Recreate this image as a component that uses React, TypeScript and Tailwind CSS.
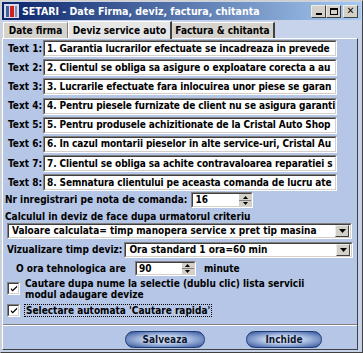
import React from "react";

const font = { fontFamily: '"DejaVu Sans Condensed", "Liberation Sans", sans-serif', fontStretch: "condensed" as const };

const texts = [
  "1. Garantia lucrarilor efectuate se incadreaza in prevede",
  "2. Clientul se obliga sa asigure o exploatare corecta a au",
  "3. Lucrarile efectuate fara inlocuirea unor piese se garan",
  "4. Pentru piesele furnizate de client nu se asigura garanti",
  "5. Pentru produsele achizitionate de la Cristal Auto Shop",
  "6. In cazul montarii pieselor in alte service-uri, Cristal Au",
  "7. Clientul se obliga sa achite contravaloarea reparatiei s",
  "8. Semnatura clientului pe aceasta comanda de lucru ate",
];

function Sunken({ className = "", children }: { className?: string; children?: React.ReactNode }) {
  return (
    <div className={"border border-t-[#808080] border-l-[#808080] border-b-white border-r-white " + className}>
      <div className="h-full w-full border border-t-[#404040] border-l-[#404040] border-b-[#d4d0c8] border-r-[#d4d0c8] bg-white flex items-center overflow-hidden">
        {children}
      </div>
    </div>
  );
}

function Raised({ className = "", children }: { className?: string; children?: React.ReactNode }) {
  return (
    <div className={"border border-t-[#ececec] border-l-[#ececec] border-b-[#404040] border-r-[#404040] bg-[#d4d0c8] flex items-center justify-center " + className}>
      {children}
    </div>
  );
}

function DownArrow() {
  return (
    <svg width="7" height="4" viewBox="0 0 7 4">
      <path d="M0 0h7L3.5 4z" fill="#000" />
    </svg>
  );
}

function Spin() {
  return (
    <div className="flex flex-col w-[12px] h-full">
      <div className="flex-1 flex items-center justify-center bg-[#d4d0c8] border-b border-[#808080]">
        <svg width="5" height="3" viewBox="0 0 5 3"><path d="M0 3h5L2.5 0z" fill="#000" /></svg>
      </div>
      <div className="flex-1 flex items-center justify-center bg-[#d4d0c8]">
        <svg width="5" height="3" viewBox="0 0 5 3"><path d="M0 0h5L2.5 3z" fill="#000" /></svg>
      </div>
    </div>
  );
}

function Check() {
  return (
    <Sunken className="w-[13px] h-[13px] shrink-0">
      <svg width="9" height="9" viewBox="0 0 9 9" className="ml-[1px]">
        <path d="M1 4l2 2 5-5v2l-5 5-2-2z" fill="#000" />
      </svg>
    </Sunken>
  );
}

const pill =
  "h-[17px] rounded-full border border-[#203c74] bg-[radial-gradient(ellipse_at_center,#e8eefa_0%,#b6c8e8_40%,#5a78b4_80%,#27457f_100%)] flex items-center justify-center text-[#101830]";

export default function App() {
  return (
    <div className="w-[363px] h-[353px] overflow-hidden bg-[#c6d3ea] text-black text-[10px] font-bold leading-none whitespace-nowrap flex flex-col border border-l-[#d4d0c8] border-t-[#d4d0c8] border-r-[#404040] border-b-[#404040]" style={font}>
      {/* Title bar */}
      <div className="h-[18px] mx-[1px] mt-[1px] flex items-center bg-[linear-gradient(to_right,#0a246a,#a6caf0)] shrink-0">
        <svg width="15" height="14" viewBox="0 0 15 14" className="ml-[2px]">
          <rect x="0" y="0" width="15" height="14" fill="#d8d8e8" />
          <rect x="2" y="2" width="3" height="11" fill="#4060a0" />
          <rect x="6" y="2" width="4" height="11" fill="#d02020" />
          <rect x="11" y="2" width="2" height="11" fill="#8090b0" />
        </svg>
        <span className="ml-[3px] text-white text-[10.5px]">SETARI - Date Firma, deviz, factura, chitanta</span>
        <div className="ml-auto mr-[3px] flex items-center">
          <Raised className="w-[15px] h-[13px]">
            <div className="w-[6px] h-[2px] bg-black mt-[6px]" />
          </Raised>
          <Raised className="w-[15px] h-[13px]">
            <div className="w-[8px] h-[7px] border border-black border-t-2" />
          </Raised>
          <Raised className="w-[15px] h-[13px] ml-[2px]">
            <span className="text-[10px] leading-none">✕</span>
          </Raised>
        </div>
      </div>
      {/* Tabs */}
      <div className="h-[18px] flex items-end px-[2px] shrink-0">
        <div className="h-[16px] w-[65px] bg-[#d6d3ce] border-l border-t border-white border-r border-r-[#808080] flex items-center justify-center">Date firma</div>
        <div className="h-[18px] w-[104px] bg-[#e6e6e6] border-l border-t border-white border-r-2 border-r-[#404040] flex items-center justify-center relative z-10 -mb-[1px]">Deviz service auto</div>
        <div className="h-[16px] w-[103px] bg-[#d6d3ce] border-t border-white border-r-2 border-r-[#404040] flex items-center justify-center">Factura &amp; chitanta</div>
      </div>
      {/* Panel */}
      <div className="flex-1 mx-[1px] mr-[4px] bg-[#b6c6e6] border-l border-t border-white border-r border-r-[#404040] border-b border-b-[#404040] flex flex-col pt-[1px]">
        <div className="flex flex-col gap-[2.2px]">
          {texts.map((t, i) => (
            <div key={i} className="flex items-center h-[17px]">
              <div className="w-[40px] text-right pr-[1px]">Text {i + 1}:</div>
              <Sunken className="w-[294px] h-[17px]">
                <span className="pl-[2px] tracking-[-0.1px]">{t}</span>
              </Sunken>
            </div>
          ))}
        </div>
        <div className="flex items-center h-[16px] mt-[1px]">
          <span className="ml-[2px]">Nr inregistrari pe nota de comanda:</span>
          <Sunken className="ml-[4px] w-[62px] h-[16px]">
            <span className="pl-[2px] flex-1">16</span>
            <Spin />
          </Sunken>
        </div>
        <div className="mt-[3px] ml-[2px] h-[12px] flex items-center">Calculul in deviz de face dupa urmatorul criteriu</div>
        <Sunken className="ml-[4px] w-[345px] h-[16px]">
          <span className="pl-[3px] flex-1">Valoare calculata= timp manopera service x pret tip masina</span>
          <Raised className="w-[14px] h-full mr-[1px]"><DownArrow /></Raised>
        </Sunken>
        <div className="flex items-center mt-[3px] h-[16px]">
          <span className="ml-[4px]">Vizualizare timp deviz:</span>
          <Sunken className="ml-[2px] w-[229px] h-[16px]">
            <span className="pl-[3px] flex-1">Ora standard 1 ora=60 min</span>
            <Raised className="w-[14px] h-full mr-[1px]"><DownArrow /></Raised>
          </Sunken>
        </div>
        <div className="flex items-center mt-[3px] h-[15px]">
          <span className="ml-[13px]">O ora tehnologica are</span>
          <Sunken className="ml-[9px] w-[61px] h-[15px]">
            <span className="pl-[2px] flex-1">90</span>
            <Spin />
          </Sunken>
          <span className="ml-[8px]">minute</span>
        </div>
        <div className="flex items-start mt-[2px] ml-[4px]">
          <div className="mt-[4px]"><Check /></div>
          <div className="ml-[5px] leading-[11px]">
            Cautare dupa nume la selectie (dublu clic) lista servicii<br />modul adaugare devize
          </div>
        </div>
        <div className="flex items-center mt-[4px] ml-[4px]">
          <Check />
          <div className="ml-[4px] border border-dotted border-black px-[1px] leading-[11px]">Selectare automata 'Cautare rapida'</div>
        </div>
        <div className="mt-[7px] border-t border-[#808080] border-b border-b-white" />
        <div className="flex items-center mt-[5px]">
          <div className={"ml-[122px] w-[80px] " + pill}>Salveaza</div>
          <div className={"ml-[41px] w-[76px] " + pill}>Inchide</div>
        </div>
      </div>
      <div className="h-[2px]" />
    </div>
  );
}
